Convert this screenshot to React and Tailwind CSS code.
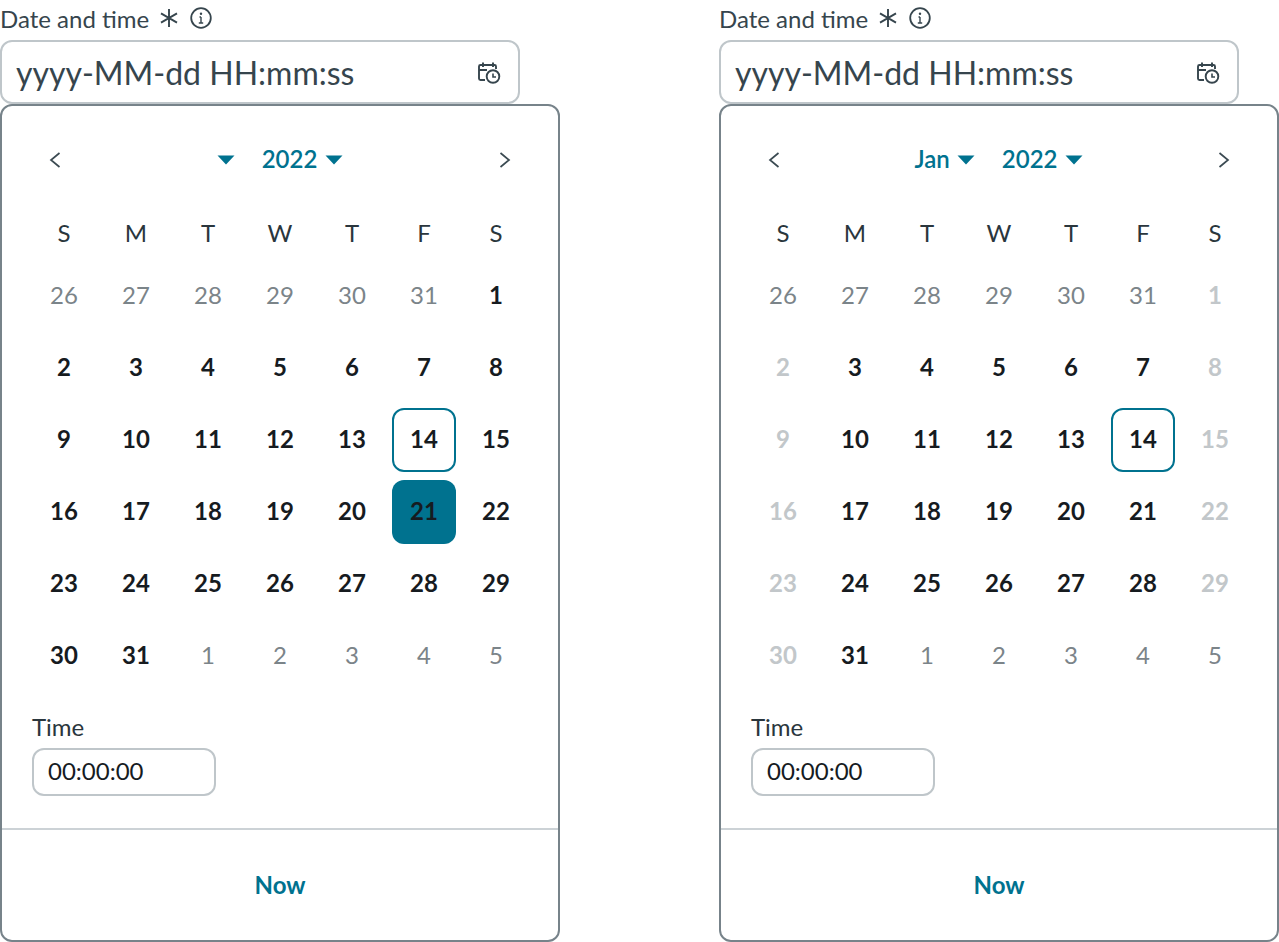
const Caret = () => (
  <svg width="18" height="10" viewBox="0 0 18 10" className="block">
    <path d="M0.5 0.5h17L9 9.5z" fill="#00728f" />
  </svg>
);

const Chevron = ({ flip }) => (
  <svg width="12" height="18" viewBox="0 0 12 18" className={flip ? 'block rotate-180' : 'block'}>
    <path d="M10.5 2L2 9l8.5 7" fill="none" stroke="#3b4a52" strokeWidth="1.7" />
  </svg>
);

const CalendarClock = () => (
  <svg width="24" height="24" viewBox="0 0 24 24" fill="none" stroke="#36454d" strokeWidth="1.9" className="block mt-[2px]">
    <path d="M8 19H3.5A1.5 1.5 0 0 1 2 17.5V5.5A1.500 1.500 0 0 1 3.500 4h14A1.500 1.500 0 0 1 19 5.500V8" />
    <path d="M2 9h8M6 1.500v4.500M16 1.500v4.500" />
    <circle cx="16" cy="15.500" r="6.300" />
    <path d="M16 12.500v3.500h3" strokeWidth="1.600" />
  </svg>
);

const Asterisk = () => (
  <svg width="20" height="20" viewBox="0 0 20 20" stroke="#36454d" strokeWidth="1.900" className="block">
    <path d="M10 1v18M2 5.400l16 9.200M18 5.400l-16 9.200" />
  </svg>
);

const Info = () => (
  <svg width="22" height="22" viewBox="0 0 22 22" fill="none" stroke="#36454d" strokeWidth="1.800" className="block">
    <circle cx="11" cy="11" r="9.800" />
    <path d="M11 10v6M8.800 16h4.400M9.500 10H11" strokeWidth="1.400" />
    <circle cx="11" cy="6.800" r="1.200" fill="#36454d" stroke="none" />
  </svg>
);

const weekdays = ['S', 'M', 'T', 'W', 'T', 'F', 'S'];

// each cell: [label, kind]  kind: o = outside month, d = normal, x = disabled
const leftDays = [
  ['26', 'o'], ['27', 'o'], ['28', 'o'], ['29', 'o'], ['30', 'o'], ['31', 'o'], ['1', 'd'],
  ['2', 'd'], ['3', 'd'], ['4', 'd'], ['5', 'd'], ['6', 'd'], ['7', 'd'], ['8', 'd'],
  ['9', 'd'], ['10', 'd'], ['11', 'd'], ['12', 'd'], ['13', 'd'], ['14', 'today'], ['15', 'd'],
  ['16', 'd'], ['17', 'd'], ['18', 'd'], ['19', 'd'], ['20', 'd'], ['21', 'sel'], ['22', 'd'],
  ['23', 'd'], ['24', 'd'], ['25', 'd'], ['26', 'd'], ['27', 'd'], ['28', 'd'], ['29', 'd'],
  ['30', 'd'], ['31', 'd'], ['1', 'o'], ['2', 'o'], ['3', 'o'], ['4', 'o'], ['5', 'o'],
];

const rightDays = [
  ['26', 'o'], ['27', 'o'], ['28', 'o'], ['29', 'o'], ['30', 'o'], ['31', 'o'], ['1', 'x'],
  ['2', 'x'], ['3', 'd'], ['4', 'd'], ['5', 'd'], ['6', 'd'], ['7', 'd'], ['8', 'x'],
  ['9', 'x'], ['10', 'd'], ['11', 'd'], ['12', 'd'], ['13', 'd'], ['14', 'today'], ['15', 'x'],
  ['16', 'x'], ['17', 'd'], ['18', 'd'], ['19', 'd'], ['20', 'd'], ['21', 'd'], ['22', 'x'],
  ['23', 'x'], ['24', 'd'], ['25', 'd'], ['26', 'd'], ['27', 'd'], ['28', 'd'], ['29', 'x'],
  ['30', 'x'], ['31', 'd'], ['1', 'o'], ['2', 'o'], ['3', 'o'], ['4', 'o'], ['5', 'o'],
];

const dayClass = {
  o: 'text-[#7b8489]',
  x: 'font-bold text-[#c2c7ca]',
  d: 'font-bold text-[#161b1f]',
  today: 'font-bold text-[#161b1f] border-2 border-[#00728f] rounded-[12px] bg-white',
  sel: 'font-bold text-[#161b1f] bg-[#00728f] rounded-[12px]',
};

const DatePicker = ({ month, days }) => (
  <div className="w-[560px] font-['Lato',sans-serif]">
    <div className="h-[40px] flex items-start gap-[10px] pt-[4px]">
      <span className="text-[24px] leading-[29px] text-[#36454d]">Date and time</span>
      <div className="flex items-center gap-[11px] mt-[3px]">
        <Asterisk />
        <Info />
      </div>
    </div>

    <div className="w-[520px] h-[64px] border-2 border-[#bfc6ca] rounded-[12px] bg-white flex items-center justify-between pl-[14px] pr-[17px]">
      <span className="text-[32px] leading-[40px] pt-[2px] text-[#36454d]">yyyy-MM-dd HH:mm:ss</span>
      <CalendarClock />
    </div>

    <div className="w-[560px] h-[838px] border-2 border-[#77838a] rounded-[12px] bg-white flex flex-col">
      <div className="h-[109px] pt-[32px] px-[47px] flex items-start justify-between">
        <div className="h-[44px] flex items-center"><Chevron /></div>
        <div className="h-[44px] flex items-center gap-[27px] text-[24px] font-semibold text-[#00728f]">
          <div className="flex items-center gap-[7px]">
            {month && <span className="pb-[2px]">{month}</span>}
            <Caret />
          </div>
          <div className="flex items-center gap-[8px]">
            <span className="pb-[2px]">2022</span>
            <Caret />
          </div>
        </div>
        <div className="h-[44px] flex items-center"><Chevron flip /></div>
      </div>

      <div className="grid grid-cols-[repeat(7,72px)] ml-[26px]">
        {weekdays.map((d, i) => (
          <div key={i} className="h-[36px] flex items-center justify-center text-[24px] text-[#2a363d]">{d}</div>
        ))}
      </div>

      <div className="grid grid-cols-[repeat(7,72px)] auto-rows-[72px] ml-[26px] mt-[9px]">
        {days.map(([label, kind], i) => (
          <div key={i} className="flex items-center justify-center">
            <div className={`w-[64px] h-[64px] flex items-center justify-center pb-[2px] text-[24px] ${dayClass[kind]}`}>{label}</div>
          </div>
        ))}
      </div>

      <div className="pl-[30px] mt-[20px]">
        <div className="text-[24px] leading-[29px] text-[#2a363d]">Time</div>
        <div className="w-[184px] h-[48px] mt-[7px] border-2 border-[#bfc6ca] rounded-[12px] flex items-center pl-[14px] pb-[2px] text-[24px] text-[#161b1f]">00:00:00</div>
      </div>

      <div className="mt-[32px] border-t-2 border-[#ccd2d6] flex-1 flex items-center justify-center text-[24px] font-bold text-[#00728f]">Now</div>
    </div>
  </div>
);

export default function App() {
  return (
    <div className="w-[1279px] h-[942px] bg-white flex justify-between overflow-hidden">
      <DatePicker days={leftDays} />
      <DatePicker month="Jan" days={rightDays} />
    </div>
  );
}
